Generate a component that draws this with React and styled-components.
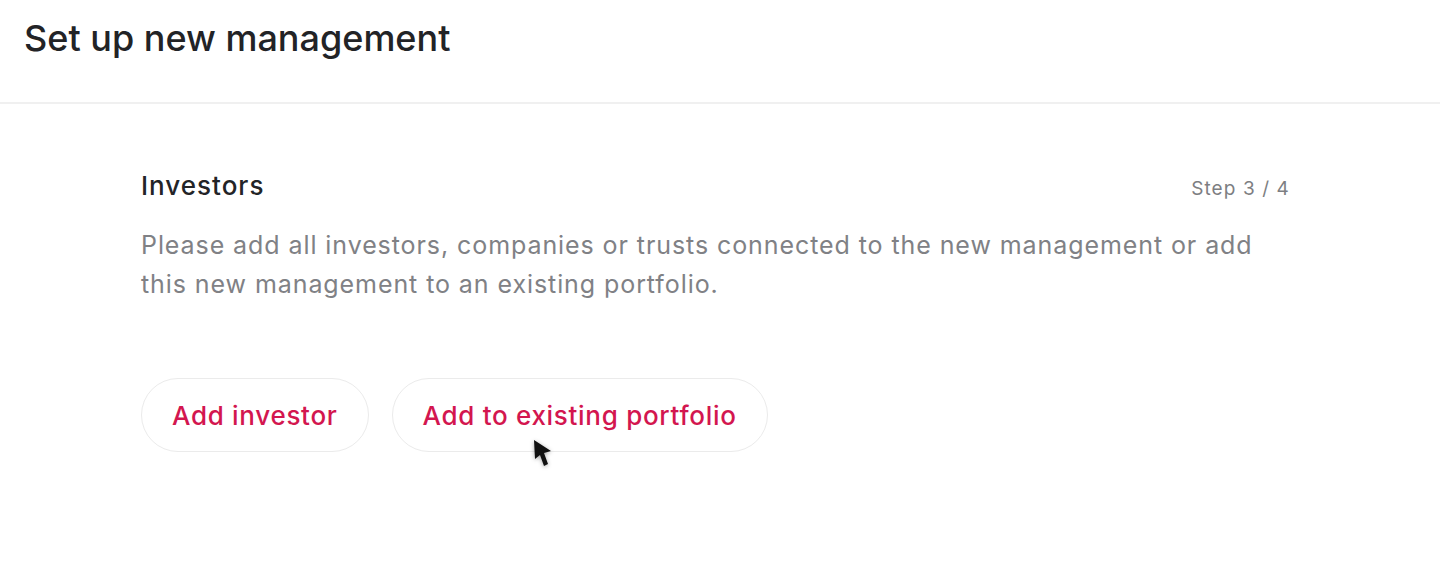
import React from "react";
import styled, { createGlobalStyle } from "styled-components";

const Global = createGlobalStyle`
  html, body { margin: 0; padding: 0; background: #ffffff; }
  body { font-family: Inter, "Noto Sans", sans-serif; -webkit-font-smoothing: antialiased; }
  * { box-sizing: border-box; }
`;

const Page = styled.div`
  width: 1440px;
  height: 572px;
  background: #ffffff;
  display: flex;
  flex-direction: column;
  overflow: hidden;
`;

const Header = styled.header`
  height: 104px;
  padding: 18px 24px 0;
  border-bottom: 2px solid #f0f0f0;
`;

const Title = styled.h1`
  margin: 0;
  font-size: 36px;
  font-weight: 500;
  color: #222326;
  line-height: 40px;
`;

const Content = styled.main`
  padding: 64px 150px 0 141px;
  display: flex;
  flex-direction: column;
`;

const SectionHead = styled.div`
  display: flex;
  justify-content: space-between;
  align-items: baseline;
`;

const SectionTitle = styled.h2`
  margin: 0;
  font-size: 26px;
  font-weight: 500;
  letter-spacing: 1px;
  color: #232427;
  line-height: 36px;
`;

const StepLabel = styled.span`
  font-size: 19px;
  letter-spacing: 1.1px;
  color: #7d7e82;
  font-weight: 400;
`;

const Description = styled.p`
  margin: 22px 0 0;
  font-size: 25px;
  letter-spacing: 0.92px;
  line-height: 39px;
  color: #808185;
  max-width: 1140px;
`;

const Actions = styled.div`
  display: flex;
  gap: 23px;
  margin-top: 74px;
`;

const PillButton = styled.button`
  position: relative;
  height: 74px;
  padding: 0 30px;
  border-radius: 37px;
  border: 1.5px solid #ebebeb;
  background: #ffffff;
  color: #d3164f;
  font-family: inherit;
  font-size: 26px;
  letter-spacing: 0.7px;
  font-weight: 500;
  cursor: pointer;
`;

const Cursor = styled.svg`
  position: absolute;
  left: 139px;
  top: 59px;
  filter: drop-shadow(0 1px 2px rgba(0,0,0,0.35));
  pointer-events: none;
`;

export default function App() {
  return (
    <Page>
      <Global />
      <Header>
        <Title>Set up new management</Title>
      </Header>
      <Content>
        <SectionHead>
          <SectionTitle>Investors</SectionTitle>
          <StepLabel>Step 3 / 4</StepLabel>
        </SectionHead>
        <Description>
          Please add all investors, companies or trusts connected to the new management or add this new management to an existing portfolio.
        </Description>
        <Actions>
          <PillButton>Add investor</PillButton>
          <PillButton>
            Add to existing portfolio
            <Cursor width="22" height="30" viewBox="0 0 22 30">
              <path d="M2 2 L19 13 L12 15 L16 26 L12 28 L8 17 L3 21 Z" fill="#111" />
            </Cursor>
          </PillButton>
        </Actions>
      </Content>
    </Page>
  );
}
